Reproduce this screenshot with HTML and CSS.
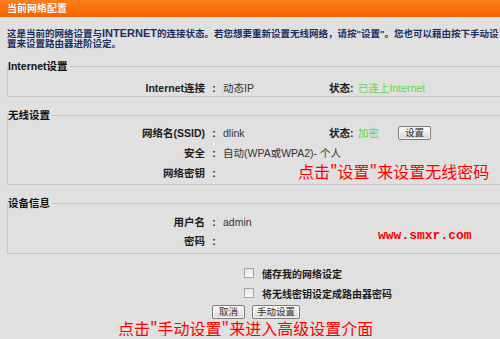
FILE: index.html
```html
<!DOCTYPE html>
<html lang="zh-CN">
<head>
<meta charset="utf-8">
<title>当前网络配置</title>
<link rel="stylesheet" href="styles.css">
</head>
<body>
<div class="page">
  <div class="titlebar">当前网络配置</div>
  <p class="intro">这是当前的网络设置与<span class="en">INTERNET</span>的连接状态。若您想要重新设置无线网络，请按"设置"。您也可以藉由按下手动设<br>置来设置路由器进阶设定。</p>

  <fieldset class="group group-inet">
    <legend>Internet设置</legend>
    <div class="row row-inet">
      <span class="lbl">Internet连接</span><span class="colon">:</span><span class="val">动态IP</span>
      <span class="slbl">状态:</span><span class="sval">已连上Internet</span>
    </div>
  </fieldset>

  <fieldset class="group group-wifi">
    <legend>无线设置</legend>
    <div class="row">
      <span class="lbl">网络名(SSID)</span><span class="colon">:</span><span class="val">dlink</span>
      <span class="slbl">状态:</span><span class="sval">加密</span>
      <button class="btn btn-set" type="button">设置</button>
    </div>
    <div class="row">
      <span class="lbl">安全</span><span class="colon">:</span><span class="val">自动(WPA或WPA2)- 个人</span>
    </div>
    <div class="row">
      <span class="lbl">网络密钥</span><span class="colon">:</span><span class="val"></span>
      <span class="tip tip-wifi">点击"设置"来设置无线密码</span>
    </div>
  </fieldset>

  <fieldset class="group group-dev">
    <legend>设备信息</legend>
    <div class="row row-dev">
      <span class="lbl">用户名</span><span class="colon">:</span><span class="val">admin</span>
    </div>
    <div class="row row-dev">
      <span class="lbl">密码</span><span class="colon">:</span><span class="val"></span>
      <span class="site">www.smxr.com</span>
    </div>
  </fieldset>

  <div class="options">
    <label class="opt"><input class="box" type="checkbox">储存我的网络设定</label>
    <label class="opt"><input class="box" type="checkbox">将无线密钥设定成路由器密码</label>
  </div>

  <div class="actions">
    <button class="btn btn-cancel" type="button">取消</button>
    <button class="btn btn-manual" type="button">手动设置</button>
  </div>

  <div class="note">点击"手动设置"来进入高级设置介面</div>
</div>
</body>
</html>
```

FILE: styles.css
```css
html, body {
  margin: 0;
  padding: 0;
  overflow: hidden;
}

body {
  background: #e0e0e0;
  font-family: "Liberation Sans", "Noto Sans CJK SC", sans-serif;
  font-size: 10.5px;
  color: #222;
}

.page {
  width: 500px;
}

.titlebar {
  height: 17px;
  line-height: 17px;
  padding-left: 7px;
  background: linear-gradient(#ff7e1c, #f46300);
  color: #fff;
  font-weight: bold;
  font-size: 10px;
  text-shadow: 0 0 1px #b04800;
}

.intro {
  margin: 0;
  padding: 11px 0 0 7px;
  font-size: 9.5px;
  line-height: 10px;
  font-weight: bold;
  color: #1b2f5e;
  white-space: nowrap;
  overflow: hidden;
}

.intro .en {
  font-size: 11px;
}

.group {
  margin: 11px 0 0 7px;
  padding: 0;
  border: 1px solid #c8c8c8;
  border-right: none;
  width: 493px;
  min-width: 0;
  box-sizing: border-box;
}

.group legend {
  padding: 0 2px 0 0;
  margin: 0;
  font-weight: bold;
  font-size: 10.5px;
  line-height: 12px;
  color: #111;
}

.group-inet {
  padding-top: 7px;
}

.group-wifi {
  margin-top: 12px;
  padding: 2px 0 1px;
}

.group-dev {
  margin-top: 12px;
  padding: 3px 0 3px;
}

.row {
  display: grid;
  grid-template-columns: 197px 18px 106px 29px 40px auto;
  align-items: center;
  height: 20px;
  line-height: 12px;
  white-space: nowrap;
  position: relative;
}

.row-inet {
  height: 17px;
}

.row-dev {
  height: 19px;
}

.lbl {
  text-align: right;
  font-weight: bold;
  color: #1c1c1c;
}

.colon {
  text-align: center;
  font-weight: bold;
}

.val {
  color: #333;
}

.slbl {
  font-weight: bold;
  color: #1c1c1c;
}

.sval {
  color: #5fd84a;
}

.btn {
  height: 14px;
  box-sizing: border-box;
  padding: 0;
  border: 1px solid #7d7d7d;
  border-radius: 2px;
  background: linear-gradient(#fefefe, #d6d6d6);
  box-shadow: inset 0 0 0 1px #f4f4f4;
  font-family: "Liberation Sans", "Noto Sans CJK SC", sans-serif;
  font-size: 9.5px;
  line-height: 12px;
  color: #333;
}

.btn-set {
  width: 33px;
}

.tip {
  position: absolute;
  font-family: "Noto Sans CJK SC", sans-serif;
  font-size: 16px;
  line-height: 18px;
  color: #ff0000;
  white-space: nowrap;
}

.tip-wifi {
  left: 290px;
  top: -1px;
}

.site {
  position: absolute;
  left: 370px;
  top: -2px;
  font-family: "Liberation Mono", monospace;
  font-weight: bold;
  font-size: 13px;
  line-height: 13px;
  color: #ff0000;
}

.options {
  margin-top: 9px;
  padding-left: 244px;
}

.opt {
  display: flex;
  align-items: center;
  gap: 8px;
  height: 20px;
  font-weight: bold;
  font-size: 10px;
  color: #1c1c1c;
  white-space: nowrap;
}

.box {
  appearance: none;
  -webkit-appearance: none;
  margin: 0;
  width: 10px;
  height: 10px;
  box-sizing: border-box;
  border: 1px solid #a3a3a3;
  background: linear-gradient(#e4e4e4, #fdfdfd);
}

.actions {
  display: flex;
  gap: 7px;
  margin-top: 2px;
  padding-left: 212px;
}

.btn-cancel {
  width: 33px;
}

.btn-manual {
  width: 48px;
}

.note {
  margin-top: 1px;
  padding-left: 118px;
  font-family: "Noto Sans CJK SC", sans-serif;
  font-size: 16px;
  line-height: 16px;
  color: #ff0000;
  white-space: nowrap;
}
```
